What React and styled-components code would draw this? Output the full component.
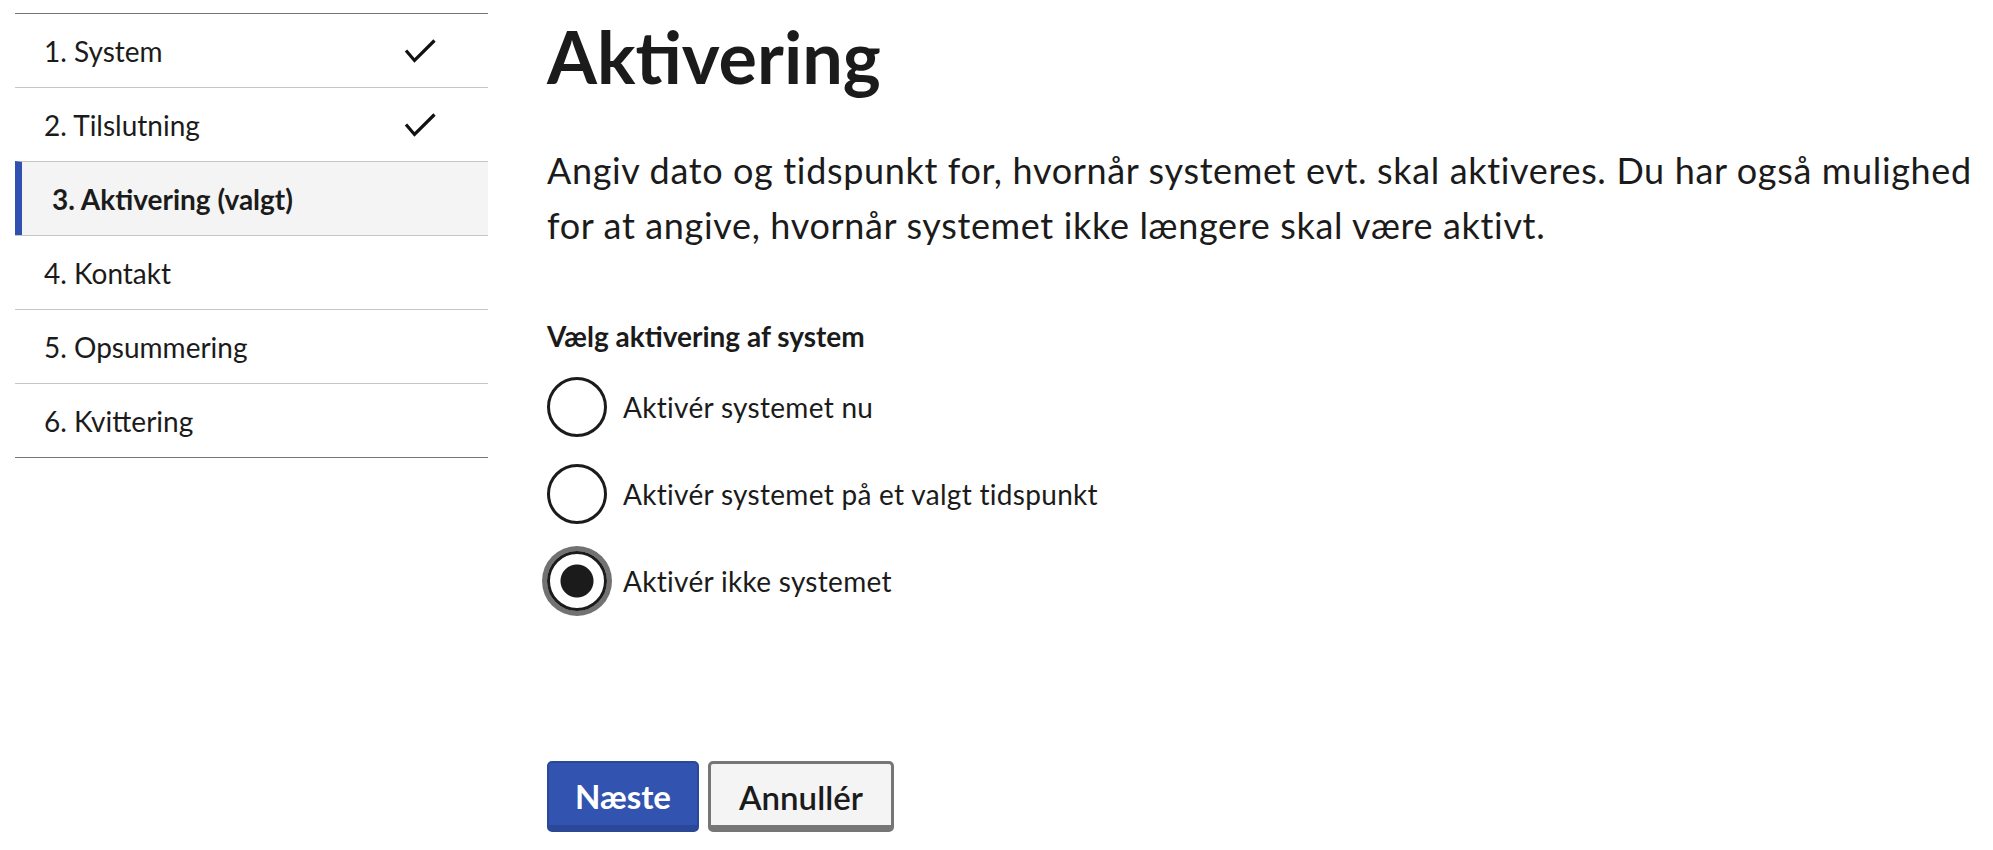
import React, { useState } from 'react'
import styled, { createGlobalStyle } from 'styled-components'

const GlobalStyle = createGlobalStyle`
  body {
    margin: 0;
    background: #fff;
    color: #1b1b1b;
    font-family: Lato, 'Open Sans', sans-serif;
  }
`

const Page = styled.div`
  display: flex;
  align-items: flex-start;
  padding: 13px 15px 0 15px;
`

const StepList = styled.ol`
  list-style: none;
  margin: 0;
  padding: 0;
  width: 473px;
  flex: none;
  border-top: 1px solid #767676;
  border-bottom: 1px solid #767676;
`

const Step = styled.li`
  display: flex;
  align-items: center;
  justify-content: space-between;
  height: 73px;
  padding: 0 52px 0 ${({ active }) => (active ? '30px' : '29px')};
  font-size: 28px;
  font-weight: ${({ active }) => (active ? 700 : 400)};
  background: ${({ active }) => (active ? '#f4f4f4' : 'transparent')};
  border-left: ${({ active }) => (active ? '7px solid #3151b0' : 'none')};

  & + & {
    border-top: 1px solid #c6c6c6;
  }
`

const Check = () => (
  <svg width='32' height='24' viewBox='0 0 32 24' fill='none'>
    <path d='M2 11.5 L10.5 21.5 L30.5 1.5' stroke='#111' strokeWidth='3.2' />
  </svg>
)

const Main = styled.main`
  flex: 1;
  margin-left: 59px;
`

const Title = styled.h1`
  margin: 0;
  font-size: 72px;
  font-weight: 700;
  line-height: 1.2;
`

const Lead = styled.p`
  margin: 44px 0 0 0;
  font-size: 36px;
  line-height: 55px;
  letter-spacing: 0.65px;
`

const Fieldset = styled.fieldset`
  border: none;
  margin: 62px 0 0 0;
  padding: 0;
`

const Legend = styled.legend`
  padding: 0;
  font-size: 28px;
  font-weight: 700;
  line-height: 42px;
`

const Options = styled.div`
  display: flex;
  flex-direction: column;
  gap: 27px;
  margin-top: 20px;
`

const Option = styled.label`
  display: flex;
  align-items: center;
  gap: 16px;
  font-size: 28px;
  letter-spacing: 0.3px;
  cursor: pointer;
`

const Radio = styled.input`
  appearance: none;
  margin: 0;
  width: 60px;
  height: 60px;
  flex: none;
  box-sizing: border-box;
  border: 3px solid #1b1b1b;
  border-radius: 50%;
  background: #fff;

  &:checked {
    background: radial-gradient(circle, #1b1b1b 16px, #fff 17px);
    box-shadow: 0 0 0 5px #727272;
  }
`

const Actions = styled.div`
  display: flex;
  gap: 9px;
  margin-top: 150px;
`

const Button = styled.button`
  height: 71px;
  box-sizing: border-box;
  padding: 4px ${({ primary }) => (primary ? '26px' : '28px')} 0;
  font-family: inherit;
  font-size: 33px;
  font-weight: ${({ primary }) => (primary ? 700 : 600)};
  color: ${({ primary }) => (primary ? '#fff' : '#1b1b1b')};
  background: ${({ primary }) => (primary ? '#3253b0' : '#f4f4f4')};
  border: ${({ primary }) => (primary ? '2px solid #2b4898' : '3px solid #767676')};
  border-bottom-width: 7px;
  border-radius: 5px;
  cursor: pointer;
`

const steps = [
  { label: '1. System', done: true },
  { label: '2. Tilslutning', done: true },
  { label: '3. Aktivering (valgt)', active: true },
  { label: '4. Kontakt' },
  { label: '5. Opsummering' },
  { label: '6. Kvittering' },
]

const options = [
  { id: 'now', label: 'Aktivér systemet nu' },
  { id: 'later', label: 'Aktivér systemet på et valgt tidspunkt' },
  { id: 'none', label: 'Aktivér ikke systemet' },
]

const App = () => {
  const [choice, setChoice] = useState('none')

  return (
    <>
      <GlobalStyle />
      <Page>
        <StepList>
          {steps.map((s) => (
            <Step key={s.label} active={s.active}>
              <span>{s.label}</span>
              {s.done && <Check />}
            </Step>
          ))}
        </StepList>
        <Main>
          <Title>Aktivering</Title>
          <Lead>
            Angiv dato og tidspunkt for, hvornår systemet evt. skal aktiveres. Du har også mulighed
            for at angive, hvornår systemet ikke længere skal være aktivt.
          </Lead>
          <Fieldset>
            <Legend>Vælg aktivering af system</Legend>
            <Options>
              {options.map((o) => (
                <Option key={o.id}>
                  <Radio
                    type='radio'
                    name='activation'
                    checked={choice === o.id}
                    onChange={() => setChoice(o.id)}
                  />
                  {o.label}
                </Option>
              ))}
            </Options>
          </Fieldset>
          <Actions>
            <Button primary>Næste</Button>
            <Button>Annullér</Button>
          </Actions>
        </Main>
      </Page>
    </>
  )
}

export default App
